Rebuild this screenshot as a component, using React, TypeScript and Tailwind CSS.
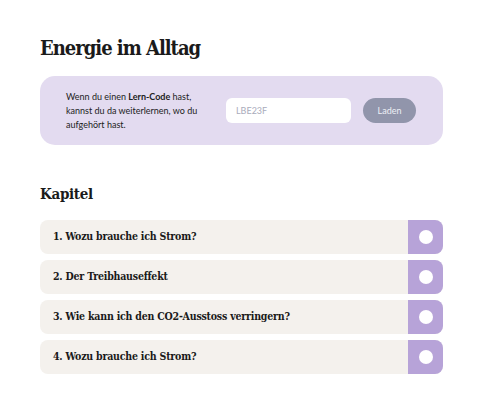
const CHAPTERS = [
  "1. Wozu brauche ich Strom?",
  "2. Der Treibhauseffekt",
  "3. Wie kann ich den CO2-Ausstoss verringern?",
  "4. Wozu brauche ich Strom?",
];

const slab = "font-['DejaVu_Serif_Condensed','DejaVu_Serif',serif]";
const sans = "font-['Lato','Noto_Sans',sans-serif]";

export default function App() {
  return (
    <div className="min-h-[414px] w-[480px] bg-white">
      <div className="ml-10 w-[403px] pt-[34px]">
        <h1
          className={`${slab} text-[20px] font-bold leading-[28px] tracking-[-0.05em] text-[#1a1a1a]`}
        >
          Energie im Alltag
        </h1>

        {/* Lern-Code box */}
        <div className="mt-[14px] flex h-[69px] items-center rounded-[15px] bg-[#e3dbf0] pl-[26px] pr-[27px]">
          <p className={`${sans} w-[140px] text-[9px] leading-[14px] text-[#222]`}>
            Wenn du einen <span className="font-bold">Lern-Code</span> hast,
            kannst du da weiterlernen, wo du aufgehört hast.
          </p>
          <div
            className={`${sans} ml-auto flex h-[25px] w-[125px] items-center rounded-[6px] bg-white px-[10px] text-[9px] text-[#a9abbb]`}
          >
            LBE23F
          </div>
          <div
            className={`${sans} ml-3 flex h-[25px] w-[53px] items-center justify-center rounded-full bg-[#9195ab] text-[9px] text-[#eef0f6]`}
          >
            Laden
          </div>
        </div>

        <h2
          className={`${slab} mt-[38px] text-[15px] font-bold leading-[22px] tracking-[-0.02em] text-[#1a1a1a]`}
        >
          Kapitel
        </h2>

        <ul className="mt-[15px] flex flex-col gap-[6px]">
          {CHAPTERS.map((c, i) => (
            <li
              key={i}
              className="flex h-[34px] overflow-hidden rounded-[8px] bg-[#f4f1ed]"
            >
              <span
                className={`${slab} flex flex-1 items-center pl-[13px] text-[10.5px] font-bold tracking-[-0.02em] text-[#1a1a1a]`}
              >
                {c}
              </span>
              <span className="flex w-[35px] items-center justify-center bg-[#b7a3d8]">
                <span className="h-[14px] w-[14px] rounded-full bg-white" />
              </span>
            </li>
          ))}
        </ul>
      </div>
    </div>
  );
}
